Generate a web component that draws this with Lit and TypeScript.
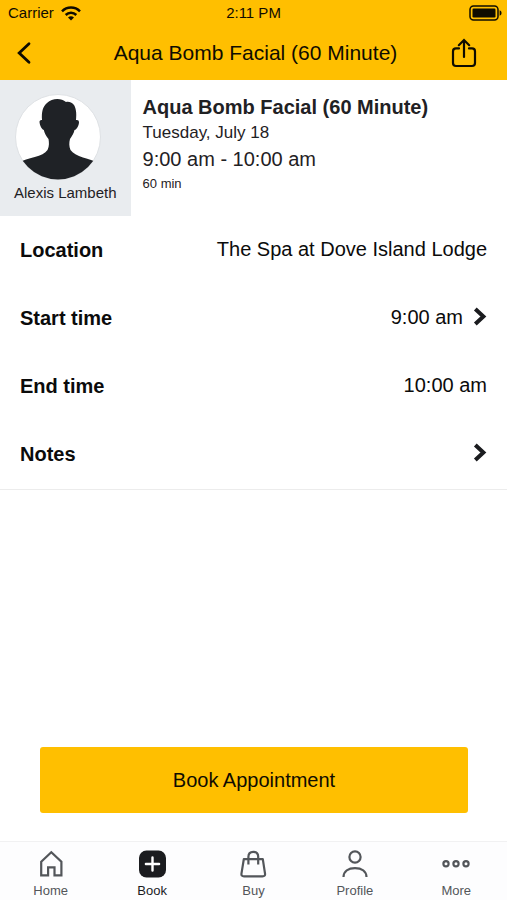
import { LitElement, html, css, svg, nothing } from "lit";
import { customElement, property } from "lit/decorators.js";

interface DetailRow {
  label: string;
  value: string;
  opens: boolean;
}

interface Tab {
  label: string;
  icon: unknown;
}

const rows: DetailRow[] = [
  { label: "Location", value: "The Spa at Dove Island Lodge", opens: false },
  { label: "Start time", value: "9:00 am", opens: true },
  { label: "End time", value: "10:00 am", opens: false },
  { label: "Notes", value: "", opens: true },
];

const line = (content: unknown) => html`
  <svg width="30" height="30" viewBox="0 0 30 30" fill="none" stroke="currentColor" stroke-width="2.2" stroke-linejoin="round" aria-hidden="true">
    ${content}
  </svg>
`;

const tabs: Tab[] = [
  {
    label: "Home",
    icon: line(svg`<path d="M5.2 12.8 15.300 3.200 25.400 12.800V26.300H18.500V18.400H12.100V26.300H5.200Z" stroke-linejoin="miter" />`),
  },
  {
    label: "Book",
    icon: line(svg`
      <rect x="2" y="1.500" width="27" height="27" rx="7.5" fill="currentColor" stroke="none" />
      <path d="M15.500 8.400V21.600M8.900 15H22.100" stroke="#fff" stroke-width="2.4" stroke-linecap="round" />
    `),
  },
  {
    label: "Buy",
    icon: line(svg`
      <path d="M5.800 10.200H24.800L27 24.400Q27.500 27.400 24.500 27.400H6Q3 27.400 3.500 24.400Z" />
      <path d="M10.400 15.400V7.800Q10.400 2.800 15.300 2.800T20.200 7.800V15.400" />
    `),
  },
  {
    label: "Profile",
    icon: line(svg`
      <circle cx="15" cy="8" r="5.600" />
      <path d="M3.500 28C3.700 22.200 8.400 19.200 15 19.200S26.300 22.200 26.500 28" />
    `),
  },
  {
    label: "More",
    icon: line(svg`
      <circle cx="5" cy="14.800" r="2.600" />
      <circle cx="15" cy="14.800" r="2.600" />
      <circle cx="25" cy="14.800" r="2.600" />
    `),
  },
];

@customElement("status-bar")
export class StatusBar extends LitElement {
  static styles = css`
    :host {
      display: grid;
      grid-template-columns: 1fr auto 1fr;
      align-items: center;
      padding: 1px 5px 0;
      font-size: 15px;
      line-height: 24px;
    }
    .carrier {
      display: flex;
      align-items: center;
      gap: 7px;
      padding-left: 3px;
    }
    .battery {
      justify-self: end;
    }
    svg {
      display: block;
    }
  `;

  render() {
    return html`
      <span class="carrier">
        Carrier
        <svg width="20" height="15" viewBox="0 0 20 15" fill="none" stroke="currentColor" stroke-width="2.5" role="img" aria-label="Wi-Fi">
          <path d="M1 5.300C6 .3 14 .3 19 5.300" />
          <path d="M4.700 9C7.700 6 12.300 6 15.300 9" />
          <path d="M10 14.400 7 11.500Q10 9 13 11.500Z" fill="currentColor" stroke="none" />
        </svg>
      </span>
      <span>2:11 PM</span>
      <svg class="battery" width="33" height="16" viewBox="0 0 33 16" role="img" aria-label="Battery full">
        <rect x="1" y="1" width="28" height="14" rx="3.5" fill="none" stroke="currentColor" stroke-width="1.5" />
        <rect x="3.5" y="3.5" width="23" height="9" rx="1.2" fill="currentColor" />
        <path d="M30.600 5.200Q32.600 6 32.600 8T30.600 10.800Z" fill="currentColor" />
      </svg>
    `;
  }
}

@customElement("detail-row")
export class DetailRowElement extends LitElement {
  @property() label = "";
  @property() value = "";
  @property({ type: Boolean }) opens = false;

  static styles = css`
    :host {
      display: block;
    }
    .row {
      box-sizing: border-box;
      display: flex;
      align-items: center;
      justify-content: space-between;
      gap: 16px;
      width: 100%;
      min-height: 68px;
      padding: 0 20px;
      border: 0;
      background: none;
      color: #0b0b0b;
      font: inherit;
      font-size: 20px;
      line-height: 24px;
      text-align: left;
    }
    .label {
      font-weight: bold;
    }
    .value {
      display: flex;
      align-items: center;
      gap: 10px;
      padding-bottom: 2px;
    }
    svg {
      display: block;
      color: #1b1c1f;
    }
  `;

  render() {
    const content = html`
      <span class="label">${this.label}</span>
      <span class="value">
        ${this.value}
        ${this.opens
          ? html`<svg width="14" height="20" viewBox="0 0 14 20" fill="none" stroke="currentColor" stroke-width="4" aria-hidden="true">
              <path d="M2.300 2 10.400 9.500 2.300 17" />
            </svg>`
          : nothing}
      </span>
    `;
    return this.opens
      ? html`<button class="row" type="button">${content}</button>`
      : html`<div class="row">${content}</div>`;
  }
}

@customElement("app-root")
export class AppRoot extends LitElement {
  static styles = css`
    :host {
      display: flex;
      flex-direction: column;
      min-height: 100vh;
      background: #fff;
      color: #1f2124;
      font-family: "Liberation Sans", Arial, sans-serif;
    }
    svg {
      display: block;
    }
    .top {
      background: #ffbf00;
      color: #0f0c00;
    }
    .nav {
      display: grid;
      grid-template-columns: 1fr auto 1fr;
      align-items: center;
      height: 55px;
      padding: 0 12px 0 16px;
    }
    .nav-title {
      margin: 0;
      font-size: 21px;
      font-weight: normal;
      line-height: 24px;
    }
    .icon-button {
      padding: 0;
      border: 0;
      background: none;
      color: inherit;
    }
    .share {
      justify-self: end;
      padding-right: 18px;
    }
    .summary {
      display: flex;
      gap: 12px;
    }
    .staff {
      box-sizing: border-box;
      display: flex;
      flex-direction: column;
      align-items: flex-start;
      gap: 3px;
      min-height: 136px;
      margin: 0;
      padding: 14px 14px 12px;
      background: #e9ecef;
      font-size: 15px;
      line-height: 20px;
      white-space: nowrap;
    }
    .service {
      padding-top: 14px;
    }
    .service-name {
      margin: 0;
      font-size: 20px;
      line-height: 26px;
    }
    .date,
    .time,
    .duration {
      margin: 0;
      font-size: 17px;
      line-height: 26px;
    }
    .time {
      font-size: 20px;
    }
    .duration {
      font-size: 13px;
      line-height: 24px;
    }
    .details {
      padding-bottom: 1px;
      border-bottom: 1px solid #ececec;
    }
    .action {
      display: flex;
      margin-top: auto;
      padding: 28px 39px 28px 40px;
    }
    .book {
      flex: 1;
      height: 66px;
      border: 0;
      border-radius: 3px;
      background: #ffbf00;
      color: #0f0c00;
      font: inherit;
      font-size: 20px;
      line-height: 24px;
    }
    .tabs {
      display: grid;
      grid-template-columns: repeat(5, 1fr);
      border-top: 1px solid #f1f1f2;
      background: #fdfdfe;
    }
    .tab {
      display: flex;
      flex-direction: column;
      align-items: center;
      gap: 4px;
      padding: 7px 0 1px;
      color: #53565a;
      font-size: 13px;
      line-height: 16px;
      text-decoration: none;
    }
    .tab[aria-current] {
      color: #1b1c1f;
    }
  `;

  render() {
    return html`
      <header class="top">
        <status-bar></status-bar>
        <div class="nav">
          <button class="icon-button" type="button" aria-label="Back">
            <svg width="16" height="24" viewBox="0 0 16 24" fill="none" stroke="currentColor" stroke-width="2.8" stroke-linecap="round">
              <path d="M13 2.800 3.200 12 13 21.200" />
            </svg>
          </button>
          <h1 class="nav-title">Aqua Bomb Facial (60 Minute)</h1>
          <button class="icon-button share" type="button" aria-label="Share">
            <svg width="26" height="30" viewBox="0 0 26 30" fill="none" stroke="currentColor" stroke-width="2.2" stroke-linecap="round">
              <path d="M13 19V2.200M7.800 7.200 13 2 18.200 7.200" />
              <path d="M8 10.400H5Q2 10.400 2 13.400V25Q2 28 5 28H21Q24 28 24 25V13.400Q24 10.400 21 10.400H18" />
            </svg>
          </button>
        </div>
      </header>
      <main>
        <section class="summary">
          <figure class="staff">
            <svg width="88" height="86" viewBox="-1 0 88 86" role="img" aria-label="Portrait of Alexis Lambeth">
              <defs>
                <clipPath id="disc"><circle cx="43" cy="43" r="42.5" /></clipPath>
              </defs>
              <circle cx="43" cy="43" r="42.5" fill="#fff" stroke="#dfe2e5" />
              <path
                clip-path="url(#disc)"
                fill="#1f2226"
                d="M0 70C14 63 28 63 32.500 56C34.500 52 34 48 33.500 45C31 42 29.500 39 28.800 36C26 35 24.500 30 24.500 27.500Q24.800 25.500 27 26C26.500 18 27.500 13 32 9C37 4 46 3.500 51 8C57 7 60 11 60.800 16C61.500 19 61.300 23 61 26Q64 25.500 64 28C64 31 62 35.500 59.500 36C59 39 57 42 55 45C54 49 54 52 55.500 56C60 63 74 64 86 70V86H0Z"
              />
            </svg>
            <figcaption>Alexis Lambeth</figcaption>
          </figure>
          <div class="service">
            <h2 class="service-name">Aqua Bomb Facial (60 Minute)</h2>
            <p class="date">Tuesday, July 18</p>
            <p class="time">9:00 am - 10:00 am</p>
            <p class="duration">60 min</p>
          </div>
        </section>
        <section class="details">
          ${rows.map(
            (row) => html`<detail-row .label=${row.label} .value=${row.value} .opens=${row.opens}></detail-row>`,
          )}
        </section>
      </main>
      <div class="action">
        <button class="book" type="button">Book Appointment</button>
      </div>
      <nav class="tabs">
        ${tabs.map(
          (tab) => html`
            <a class="tab" href="#${tab.label.toLowerCase()}" aria-current=${tab.label === "Book" ? "page" : nothing}>
              ${tab.icon}
              <span>${tab.label}</span>
            </a>
          `,
        )}
      </nav>
    `;
  }
}
